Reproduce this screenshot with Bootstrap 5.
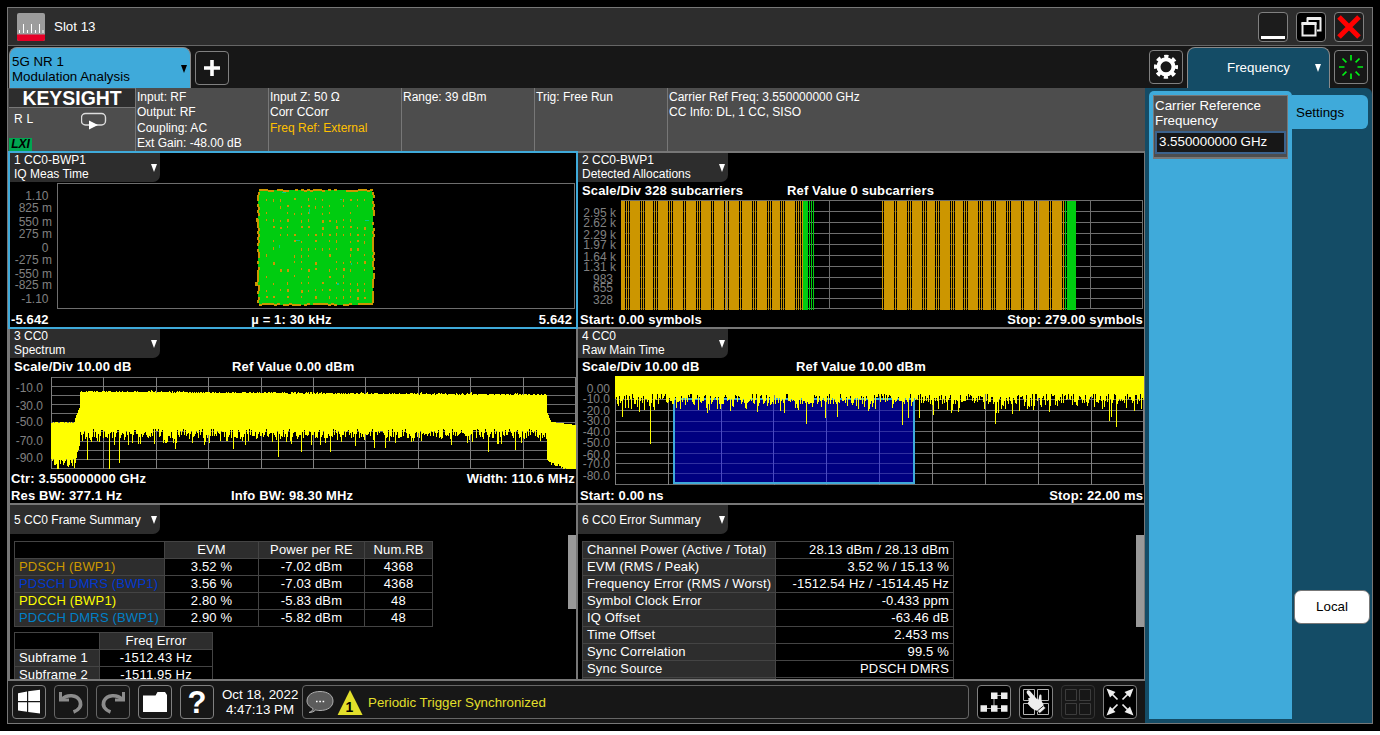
<!DOCTYPE html>
<html lang="en">
<head>
<meta charset="utf-8">
<title>Slot 13</title>
<link href="https://cdn.jsdelivr.net/npm/bootstrap@5.3.0/dist/css/bootstrap.min.css" rel="stylesheet">
<style>
body{background:#fff;font-family:"Liberation Sans",Arial,sans-serif;font-size:13.33px;line-height:15px;color:#fff;overflow:hidden}
svg{display:block;flex:none}
.desk{width:1380px;height:731px;background:#000;padding:7px 7px 7px 7px}
.win{width:1366px;height:717px;border:1px solid #777;background:#171717}
.titlebar{height:38px;background:#2d2d2d;border-bottom:1px solid #666;padding:0 8px 0 9px}
.sq{width:34px;height:34px;padding:0;border:1px solid #808080;border-radius:4px;background:#171717;flex:none;overflow:hidden}
.sq.w30{width:30px;height:30px;background:#1c1c1c}
.sq.blk{background:#000}
.sq.dim{border-color:#666}
.sq.off{border-color:#333}
.main{width:1137px}
.side{width:227px}
.tabs{height:42px}
.apptab{width:182px;height:41px;margin:1px 0 0 1px;background:#3faada;border:1px solid #8a8a8a;border-bottom:0;border-radius:8px 8px 0 0;color:#000;padding:6px 0 0 2px}
.apptab,.tag{position:relative}
.tri{width:0;height:0;border:3.5px solid transparent;border-top:8px solid #fff;border-bottom:0}
.apptab .tri{position:absolute;right:3px;top:17px;border-top-color:#000}
.info{height:63px;background:#4d4d4d;font-size:12px;line-height:15.5px}
.info>div{border-right:1px solid #777;padding:1.6px 0 0 1px;width:133px;white-space:nowrap}
.info>div:first-child{width:128px;padding:0 0 0 1px}
.info>div:last-child{border:0;width:auto}
.brand{height:18px;background:#2d2d2d;font:bold 19.4px/18px "Liberation Sans",Arial,sans-serif;text-align:center;margin-top:1px}
.brandline{height:1px;background:#777}
.lxi{width:23px;height:13px;background:#00a651;color:#000;font:italic bold 12px/13px "Liberation Sans",sans-serif;text-align:center}
.panels{display:grid;grid-template-columns:568px 568px;grid-template-rows:176px 176px 176px;border-right:1px solid #777;border-bottom:2px solid #777;width:1137px}
.pane{background:#000;border-left:2px solid #777;border-top:2px solid #777;overflow:hidden;position:relative;font-weight:bold;font-size:13px;letter-spacing:.14px}
.pane.sel{overflow:visible;border-color:#3faada}
.pane.sel::after{content:"";position:absolute;inset:-2px;border:2px solid #3faada;z-index:2;pointer-events:none}
.tag{width:150px;height:29px;background:#2d2d2d;border-radius:0 0 7px 0;font-size:12px;font-weight:normal;line-height:14px;padding-left:4px;white-space:nowrap;flex:none;letter-spacing:0}
.tag .tri{position:absolute;right:3px;top:11px}
.cap{height:18px;line-height:18px;padding-left:4px;white-space:nowrap;flex:none}
.foot{line-height:17px;height:17px;padding:0 1px;white-space:nowrap;flex:none}
.foot.rt{padding-left:2px}
.foot>*{flex:1 1 0}
svg text{font-size:12px;font-weight:normal;fill:#808080;letter-spacing:0}
.grd{border-collapse:collapse;font-size:13px;font-weight:normal;line-height:16px;table-layout:fixed;letter-spacing:.16px}
.grd td{border:1px solid #444;height:17px;padding:0 4px;white-space:nowrap;overflow:visible}
.grd .h{background:#2d2d2d}
.sbar{position:absolute;right:0;top:30px;width:8px;background:#999}
.status{height:42px;padding:4px 8px 0 4px;gap:8px}
.msg{width:667px;height:34px;border:1px solid #666;border-radius:4px;color:#e2df2b}
.freqtab{width:143px;height:41px;border:1px solid #8a8a8a;border-bottom:0;border-radius:8px 8px 0 0;background:#144c66;margin-top:1px}
.drawer{background:#144c66;height:635px;border-left:1px solid #144c66;border-radius:0 6px 0 0;padding:3px 0 0 3px}
.lite{width:143px;height:628px;background:#3faada;border-radius:5px 5px 0 0;padding:4px 4px 0}
.crd{height:64px;background:#4d4d4d;border:1px solid #777;border-width:1px 1px 2px;padding:2px 1px 0 1px}
.val{height:23px;border:2px solid #3c628c;background:#171717;line-height:18px;padding-left:2px;margin-top:3px}
.settab{width:76px;height:34px;margin-top:4px;background:#3faada;border-radius:0 6px 6px 0;color:#000;line-height:36px;padding-left:4px}
.localbtn{width:76px;height:34px;margin:461px 0 0 2px;background:#fff;color:#000;border:1px solid #777;border-radius:7px;line-height:31px;padding:0 0 2px;font-size:13.33px}
</style>
</head>
<body>
<div class="desk">
<div class="win d-flex flex-column">
  <div class="titlebar d-flex align-items-center">
    <svg width="28" height="28" viewBox="0 0 28 28"><rect width="28" height="28" rx="2" fill="#9c9c9c"/><path d="M0 21.500h28V26a2 2 0 0 1-2 2H2a2 2 0 0 1-2-2z" fill="#e60026"/><path d="M2.500 17v3M6.500 11v9M10.500 17v3M14.500 11v9M18.500 17v3M22.500 11v9M26 17v3" stroke="#fff"/></svg>
    <span class="me-auto" style="margin-left:9px">Slot 13</span>
    <div class="d-flex gap-2">
      <button class="sq w30"><svg width="28" height="28"><path d="M2 24.500h24" stroke="#fff" stroke-width="3"/></svg></button>
      <button class="sq w30 blk"><svg width="28" height="28" fill="none" stroke="#eee"><path d="M10.500 9V5.500H23.500V17.500H20" stroke-width="2"/><path d="M10 5.500H24" stroke-width="3"/><rect x="5.500" y="10.500" width="13" height="12" stroke-width="2" fill="#000"/><path d="M4.500 10.500H19.500" stroke-width="3"/></svg></button>
      <button class="sq w30"><svg width="28" height="28"><path d="M4 4L24 24M24 4L4 24" stroke="#f00" stroke-width="5"/></svg></button>
    </div>
  </div>
  <div class="d-flex">
    <div class="main">
      <div class="tabs d-flex">
        <div class="apptab">5G NR 1<br>Modulation Analysis<i class="tri"></i></div>
        <button class="sq" style="margin:5px 0 0 4px"><svg width="32" height="32"><path d="M16 8v16M8 16h16" stroke="#fff" stroke-width="3.600"/></svg></button>
      </div>
      <div class="info d-flex">
        <div><div class="brand">KEYSIGHT</div><div class="brandline"></div>
          <div class="d-flex justify-content-between" style="height:30px"><span style="padding:4px 0 0 5px;letter-spacing:.2px">R L</span>
          <svg width="54" height="28" viewBox="0 0 54 28"><rect x="0.500" y="5.500" width="24" height="11.500" rx="4" fill="none" stroke="#ddd" stroke-width="1.400"/><path d="M8 12.500L17 17L8 21.500z" fill="#fff"/></svg></div>
          <div class="lxi">LXI</div></div>
        <div>Input: RF<br>Output: RF<br>Coupling: AC<br>Ext Gain: -48.00 dB</div>
        <div>Input Z: 50 Ω<br>Corr CCorr<br><span style="color:#ffc000">Freq Ref: External</span></div>
        <div>Range: 39 dBm</div>
        <div>Trig: Free Run</div>
        <div>Carrier Ref Freq: 3.550000000 GHz<br>CC Info: DL, 1 CC, SISO</div>
      </div>
      <div class="panels">
        <div class="pane sel d-flex flex-column">
          <div class="tag">1 CC0-BWP1<br>IQ Meas Time<i class="tri"></i></div>
          <svg id="iq" width="566" height="129" viewBox="10 182 566 129"></svg>
          <div class="foot d-flex"><span>-5.642</span><span class="text-center">µ = 1: 30 kHz</span><span class="text-end" style="padding-right:3px">5.642</span></div>
        </div>
        <div class="pane d-flex flex-column">
          <div class="tag">2 CC0-BWP1<br>Detected Allocations<i class="tri"></i></div>
          <div class="cap d-flex"><span style="width:205px">Scale/Div 328 subcarriers</span><span>Ref Value 0 subcarriers</span></div>
          <svg id="alloc" width="566" height="111" viewBox="578 200 566 111"></svg>
          <div class="foot rt d-flex"><span>Start: 0.00 symbols</span><span class="text-end">Stop: 279.00 symbols</span></div>
        </div>
        <div class="pane d-flex flex-column">
          <div class="tag">3 CC0<br>Spectrum<i class="tri"></i></div>
          <div class="cap d-flex"><span style="width:218px">Scale/Div 10.00 dB</span><span>Ref Value 0.00 dBm</span></div>
          <svg id="spec" width="566" height="94" viewBox="10 376 566 94"></svg>
          <div class="foot d-flex"><span>Ctr: 3.550000000 GHz</span><span class="text-end">Width: 110.6 MHz</span></div>
          <div class="foot d-flex"><span style="flex:0 0 220px">Res BW: 377.1 Hz</span><span>Info BW: 98.30 MHz</span></div>
        </div>
        <div class="pane d-flex flex-column">
          <div class="tag">4 CC0<br>Raw Main Time<i class="tri"></i></div>
          <div class="cap d-flex"><span style="width:214px">Scale/Div 10.00 dB</span><span>Ref Value 10.00 dBm</span></div>
          <svg id="raw" width="566" height="111" viewBox="578 376 566 111"></svg>
          <div class="foot rt d-flex"><span>Start: 0.00 ns</span><span class="text-end">Stop: 22.00 ms</span></div>
        </div>
        <div class="pane">
          <div class="tag" style="line-height:30px">5 CC0 Frame Summary<i class="tri"></i></div>
          <table class="grd" style="width:419px;margin:7px 0 0 4px"><colgroup><col style="width:150px"><col style="width:94px"><col style="width:106px"><col style="width:68px"></colgroup>
            <tr class="text-center"><td></td><td class="h">EVM</td><td class="h">Power per RE</td><td class="h">Num.RB</td></tr>
            <tr class="text-center"><td class="h text-start" style="color:#c90">PDSCH (BWP1)</td><td>3.52 %</td><td>-7.02 dBm</td><td>4368</td></tr>
            <tr class="text-center"><td class="h text-start" style="color:#0038d0">PDSCH DMRS (BWP1)</td><td>3.56 %</td><td>-7.03 dBm</td><td>4368</td></tr>
            <tr class="text-center"><td class="h text-start" style="color:#ff0">PDCCH (BWP1)</td><td>2.80 %</td><td>-5.83 dBm</td><td>48</td></tr>
            <tr class="text-center"><td class="h text-start" style="color:#0080c8">PDCCH DMRS (BWP1)</td><td>2.90 %</td><td>-5.82 dBm</td><td>48</td></tr>
          </table>
          <table class="grd" style="width:199px;margin:5px 0 0 4px"><colgroup><col style="width:85px"><col style="width:113px"></colgroup>
            <tr class="text-center"><td></td><td class="h">Freq Error</td></tr>
            <tr class="text-center"><td class="h text-start">Subframe 1</td><td>-1512.43 Hz</td></tr>
            <tr class="text-center"><td class="h text-start">Subframe 2</td><td>-1511.95 Hz</td></tr>
          </table>
          <div class="sbar" style="height:74px"></div>
        </div>
        <div class="pane">
          <div class="tag" style="line-height:30px">6 CC0 Error Summary<i class="tri"></i></div>
          <table class="grd" style="width:372px;margin:7px 0 0 4px"><colgroup><col style="width:193px"><col style="width:178px"></colgroup>
            <tr><td class="h">Channel Power (Active / Total)</td><td class="text-end">28.13 dBm / 28.13 dBm</td></tr>
            <tr><td class="h">EVM (RMS / Peak)</td><td class="text-end">3.52 % / 15.13 %</td></tr>
            <tr><td class="h">Frequency Error (RMS / Worst)</td><td class="text-end">-1512.54 Hz / -1514.45 Hz</td></tr>
            <tr><td class="h">Symbol Clock Error</td><td class="text-end">-0.433 ppm</td></tr>
            <tr><td class="h">IQ Offset</td><td class="text-end">-63.46 dB</td></tr>
            <tr><td class="h">Time Offset</td><td class="text-end">2.453 ms</td></tr>
            <tr><td class="h">Sync Correlation</td><td class="text-end">99.5 %</td></tr>
            <tr><td class="h">Sync Source</td><td class="text-end">PDSCH DMRS</td></tr>
            <tr><td class="h"></td><td></td></tr>
          </table>
          <div class="sbar" style="height:92px"></div>
        </div>
      </div>
      <div class="status d-flex">
        <button class="sq"><svg width="32" height="32" viewBox="1 1 32 32" fill="#fff"><path d="M6 8.200L15 6.500V16H6zM16.200 6.300L28 4.700V16H16.200zM6 17.200H15V26.700L6 25.400zM16.200 17.200H28V28.500L16.200 26.900z"/></svg></button>
        <button class="sq dim"><svg width="32" height="32" viewBox="1 1 32 32" fill="none" stroke="#8c8c8c" stroke-width="3"><path d="M6.500 7V15H15"/><path d="M7.500 14.500C13 9 23 9.500 26 16C28 21 25 25 19.500 27" stroke-width="3.600"/></svg></button>
        <button class="sq dim"><svg width="32" height="32" viewBox="1 1 32 32" fill="none" stroke="#8c8c8c" stroke-width="3"><path d="M27.500 7V15H19"/><path d="M26.500 14.500C21 9 11 9.500 8 16C6 21 9 25 14.500 27" stroke-width="3.600"/></svg></button>
        <button class="sq"><svg width="32" height="32" viewBox="1 1 32 32" fill="#fff"><path d="M5 10.500H17.500L19.500 7H27L29 10V27H5z"/></svg></button>
        <button class="sq"><svg width="32" height="32" viewBox="1 1 32 32"><text x="17" y="28" text-anchor="middle" style="font:bold 31px 'Liberation Sans';fill:#fff">?</text></svg></button>
        <div class="text-center" style="width:76px;padding-top:2px;margin-right:-4px;white-space:nowrap">Oct 18, 2022<br>4:47:13 PM</div>
        <div class="msg d-flex align-items-center" style="margin-right:0">
          <svg width="62" height="32" viewBox="303 686 62 32"><path d="M309 712.500C312 711.500 313 710 313 708.500C309 706.500 307 704 307 701C307 695 312.500 691.500 320 691.500S333 695 333 701S327.500 710.500 320 710.500C318 710.500 317 710.300 315.500 710C314 711.500 312 712.500 309 712.500z" fill="#5c5c5c" stroke="#b0b0b0" stroke-width="1"/><path d="M316 701.500h1.600M319.300 701.500h1.600M322.600 701.500h1.600" stroke="#fff" stroke-width="1.600"/><path d="M350 690L362.600 715H337.600z" fill="#e2df2b"/><text x="349.500" y="712" text-anchor="middle" style="font:bold 14px 'Liberation Sans';fill:#000">1</text></svg>
          <span style="margin-left:3px">Periodic Trigger Synchronized</span>
        </div>
        <button class="sq blk"><svg width="32" height="32" viewBox="1 1 32 32"><path d="M17 10.500H27M17 10.500V23.500M6.500 23.500H27" stroke="#aaa" fill="none"/><path d="M14 7.500h6.500v6.500h-6.500zM24 7.500h6.500v6.500H24zM3.500 20.300H10v6.500H3.500zM14 20.300h6.500v6.500H14zM24 20.300h6.500v6.500H24z" fill="#eee"/></svg></button>
        <button class="sq blk"><svg width="32" height="32" viewBox="1 1 32 32"><path d="M4.500 4.500h11v11h-11zM18.500 4.500h11v11h-11zM4.500 18.500h11v11h-11zM18.500 18.500h11v11h-11z" fill="none" stroke="#b5b5b5"/><path d="M8.300 5.800C9.200 5 10.500 5.400 11.200 6.300L17.600 13.800L19.500 14.500L20.300 10.500C20.700 9 22.400 9.200 22.500 10.700L22.600 16L25 20.500L19.500 26C16 25.500 13 23.500 11.500 22L8.500 18.500L10 16L9 13.500L11 12.500L8 8.500C7.500 7.500 7.500 6.500 8.300 5.800z" fill="#eee"/><path d="M24.500 20.800L26.800 23L20.800 28.500L18.300 26z" fill="#eee" stroke="#000" stroke-width=".8"/></svg></button>
        <button class="sq off"><svg width="32" height="32" viewBox="1 1 32 32"><path d="M4.500 4.500h11v11h-11zM18.500 4.500h11v11h-11zM4.500 18.500h11v11h-11zM18.500 18.500h11v11h-11z" fill="none" stroke="#3c3c3c"/></svg></button>
        <button class="sq blk"><svg width="32" height="32" viewBox="1 1 32 32"><g stroke="#eee" stroke-width="1.700"><path d="M8 8L14.500 14.500M26 8L19.500 14.500M8 26L14.500 19.500M26 26L19.500 19.500"/></g><path d="M3.500 3.500L12.500 7L7 12.500zM30.500 3.500L27 12.500L21.500 7zM3.500 30.500L7 21.500L12.500 27zM30.500 30.500L21.500 27L27 21.500z" fill="#eee"/></svg></button>
      </div>
    </div>
    <div class="side">
      <div class="tabs d-flex" style="gap:4px;padding-left:4px">
        <button class="sq" style="margin-top:4px"><svg width="32" height="32" viewBox="1 1 32 32" fill="none" stroke="#fff"><circle cx="17" cy="16.800" r="7.500" stroke-width="4"/><circle cx="17" cy="16.800" r="10.200" stroke-width="3.600" stroke-dasharray="4.200 3.811" stroke-dashoffset="2.100"/></svg></button>
        <div class="freqtab d-flex align-items-center"><span class="flex-fill text-center" style="padding-bottom:2px">Frequency</span><i class="tri" style="margin:0 8px 0 -14px"></i></div>
        <button class="sq" style="margin-top:4px"><svg width="32" height="32" viewBox="1 1 32 32"><path d="M17 5V10.500M17 23.500V29M5 17H10.500M23.500 17H29M8.500 8.500L12.400 12.400M21.600 21.600L25.500 25.500M25.500 8.500L21.600 12.400M12.400 21.600L8.500 25.500" stroke="#00f014" stroke-width="1.700"/></svg></button>
      </div>
      <div class="drawer d-flex">
        <div class="lite"><div class="crd">Carrier Reference<br>Frequency<div class="val">3.550000000 GHz</div></div></div>
        <div><div class="settab">Settings</div><button class="localbtn">Local</button></div>
      </div>
    </div>
  </div>
</div>
</div>
<script src="https://cdn.jsdelivr.net/npm/bootstrap@5.3.0/dist/js/bootstrap.bundle.min.js"></script>
<script>
let seed = 7;
function rnd(){ seed = (seed * 16807) % 2147483647; return seed / 2147483647; }
function bar(x, y, w, h, c){ return `<rect x="${x}" y="${y}" width="${w}" height="${h}" fill="${c}"/>`; }
function wrap(s){ return `<g shape-rendering="crispEdges">${s}</g>`; }
function labels(list){ return list.map(([t, x, y]) => `<text x="${x}" y="${Math.floor(y + 4)}" text-anchor="end">${t}</text>`).join(''); }
function put(id, s){ document.getElementById(id).innerHTML = s; }
const G = '#6e6e6e', ORANGE = '#cc9600', GREEN = '#00cc10', Y = '#ff0';

// IQ scatter
let s = bar(57,183,518,1,G) + bar(57,183,1,126,G) + bar(57,308,518,1,G) + bar(574,183,1,126,G);
s += bar(259,190,113,115,GREEN) + bar(258,192,115,111,GREEN);
for (let x = 259; x < 373; x += 3) {
  if (rnd() < .85) s += bar(x, 189 + (rnd() < .4 ? 1 : 0), 3, 2, ORANGE);
  if (rnd() < .85) s += bar(x, 303 + (rnd() < .4 ? 1 : 0), 3, 2, ORANGE);
}
for (let y = 192; y < 303; y += 3) {
  if (rnd() < .9) s += bar(257 + (rnd() < .5 ? 1 : 0), y, 2, 3, ORANGE);
  if (rnd() < .9) s += bar(372 + (rnd() < .4 ? 1 : 0), y, 2, 3, ORANGE);
}
s += bar(256,218,2,4,ORANGE) + bar(255,282,3,4,ORANGE);
for (let i = 0; i < 15; i++) for (let j = 0; j < 15; j++)
  if (rnd() < .68) s += bar(266 + 7*i, 198 + 7*j + Math.floor(rnd()*2), rnd() < .25 ? 2 : 1, rnd() < .4 ? 3 : 2, ORANGE);
[[282,192,4,1],[309,209,1,5],[365,220,4,1],[296,240,4,1],[279,245,1,3],[340,199,2,1],[337,283,2,2],[351,263,1,2]].forEach(r => s += bar(...r, '#00c890'));
put('iq', wrap(s) + labels([['1.10',48.5,196],['825 m',52,208],['550 m',52,222],['275 m',52,234],['0',48.5,248],['-275 m',52,260],['-550 m',52,274],['-825 m',52,285],['-1.10',48.5,299]]));

// Detected allocations
s = '';
[200,211,222,233,244,255,266,277,288,298,308].forEach(y => s += bar(621,y,522,1,G));
for (let k = 0; k <= 10; k++) s += bar(Math.round(621 + 52.1*k), 200, 1, 109, G);
function blocks(list){
  list.forEach(([a, b], i) => {
    s += bar(a, 201, b - a, 109, ORANGE);
    if (i < list.length - 1) {
      s += bar(b, 201, list[i+1][0] - b, 109, 'rgba(0,0,0,.45)');
      for (let x = b + 1; x < list[i+1][0] - 1; x += 2) s += bar(x, 201, 1, 109, ORANGE);
    }
  });
}
blocks([[621,625],[630,640],[645,653],[658,668],[673,683],[686,696],[701,711],[714,724],[729,739],[742,752],[757,767],[772,780],[785,795],[802,803]]);
s += bar(803,201,5,109,GREEN) + bar(809,201,1,109,GREEN) + bar(811,201,1,109,GREEN) + bar(813,201,1,109,GREEN);
blocks([[882,883],[884,894],[897,907],[912,922],[927,935],[940,950],[955,963],[968,978],[983,991],[996,1006],[1011,1021],[1024,1034],[1039,1049],[1052,1062]]);
s += bar(1063,201,1,109,ORANGE) + bar(1065,201,1,109,GREEN) + bar(1067,201,9,109,GREEN) + bar(726,201,1,109,'#888') + bar(1038,201,1,109,'#888');
put('alloc', wrap(s) + labels([['2.95 k',616,213],['2.62 k',616,223],['2.29 k',616,235],['1.97 k',616,245],['1.64 k',616,257],['1.31 k',616,267],['983',613,279],['655',613,288],['328',613,300]]));

// Spectrum
s = '';
[377,386,395,404,413,422,431,441,450,459,468].forEach(y => s += bar(51,y,524,1,G));
for (let k = 0; k <= 10; k++) s += bar(Math.round(51 + 52.4*k), 377, 1, 92, '#808080');
const dips = {87:460,109:469,119:463,175:449,233:449,278:457,301:452,330:452,374:448,385:448,488:452,515:450,154:444,114:445,165:443,204:445,245:445,311:445,355:446,451:445};
for (let x = 51; x < 576; x++) {
  let t, b;
  if (x < 75) { t = 422 + Math.floor(rnd()*1.6); b = 459 + rnd()*10; }
  else if (x < 80) { t = 418 - (x-75)*2.6; b = 460 - (x-75)*4 + rnd()*4; }
  else if (x < 547) { t = 390.600 + (x-80)*.007 + rnd()*1.6 - (rnd() < .05 ? 1 : 0); b = 429 + rnd()*9 + (rnd() < .35 ? rnd()*8 : 0); }
  else if (x < 551) { t = 413 + (x-547)*2.3; b = 457 + (x-547)*1.500 + rnd()*3; }
  else { t = 422 + (x-551)*.12; b = Math.min(468.5, 461 + (x-551)*.4 + rnd()*5); }
  if (dips[x]) b = dips[x];
  s += bar(x, Math.round(t), 1, Math.min(469, Math.round(b)) - Math.round(t), Y);
}
put('spec', wrap(s) + labels([['-10.0',43,388],['-30.0',43,406],['-50.0',43,422],['-70.0',43,441],['-90.0',43,458]]));

// Raw main time
const hy = [399,410,421,431,442,453,463,473,484];
s = '';
hy.forEach(y => s += bar(615,y,529,1,G));
for (let k = 0; k <= 10; k++) s += bar(Math.min(1143, Math.round(615 + 52.850*k)), 376, 1, 109, '#808080');
s += bar(673,398,242,86,'#3faada') + bar(675,400,238,82,'#000080');
hy.slice(1,8).forEach(y => s += bar(675,y,238,1,'#3030a0'));
[721,773,826,879].forEach(x => s += bar(x,400,1,82,'#4a4ac0'));
const drops = {622:417,650:444,707:413,730:411,757:412,784:413,806:424,825:418,837:417,902:425,908:418,919:418,933:415,951:413,995:424,996:413,998:413,1012:414,1109:421,1111:417,1116:427};
for (let x = 615; x < 1144; x++) {
  const b = drops[x] || 393.5 + rnd()*11 + (rnd() < .4 ? rnd()*8 : 0);
  s += bar(x, 376, 1, Math.round(b) - 376, Y);
}
put('raw', wrap(s) + labels([['0.00',610,389],['-10.0',610,399],['-20.0',610,411],['-30.0',610,421],['-40.0',610,432],['-50.0',610,443],['-60.0',610,455],['-70.0',610,464],['-80.0',610,476]]));
</script>
</body>
</html>
